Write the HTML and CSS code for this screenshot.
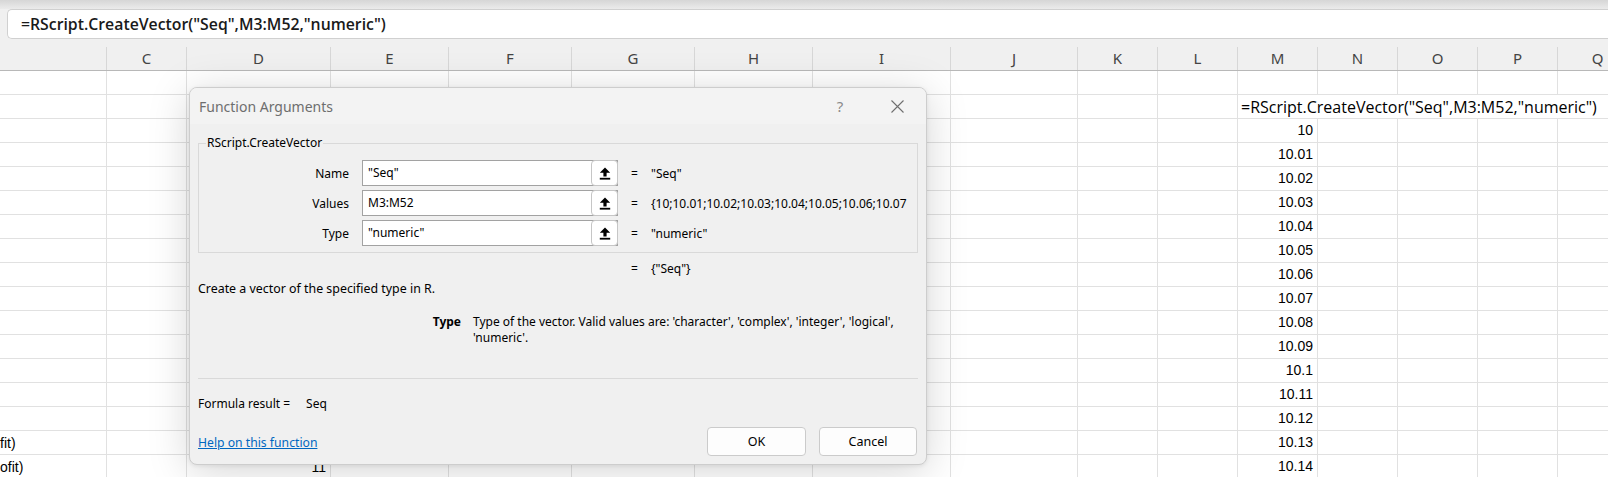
FILE: index.html
```html
<!DOCTYPE html>
<html lang="en">
<head>
<meta charset="utf-8">
<title>Function Arguments</title>
<link rel="stylesheet" href="styles.css">
</head>
<body>
<div class="app">
  <div class="topstrip"></div>
  <div class="formula-area">
    <div class="fbar">=RScript.CreateVector("Seq",M3:M52,"numeric")</div>
  </div>
  <div class="colheads">
    <div class="ch"></div>
    <div class="ch">C</div>
    <div class="ch">D</div>
    <div class="ch">E</div>
    <div class="ch">F</div>
    <div class="ch">G</div>
    <div class="ch">H</div>
    <div class="ch">I</div>
    <div class="ch">J</div>
    <div class="ch">K</div>
    <div class="ch">L</div>
    <div class="ch">M</div>
    <div class="ch">N</div>
    <div class="ch">O</div>
    <div class="ch">P</div>
    <div class="ch">Q</div>
  </div>
  <div class="sheet">
    <div class="col end">
      <div class="cell txt">fit)</div>
      <div class="cell txt">ofit)</div>
    </div>
    <div class="col"></div>
    <div class="col end"><div class="cell num">11</div></div>
    <div class="col"></div>
    <div class="col"></div>
    <div class="col"></div>
    <div class="col"></div>
    <div class="col"></div>
    <div class="col"></div>
    <div class="col"></div>
    <div class="col"></div>
    <div class="col">
      <div class="cell"></div>
      <div class="cell formula">=RScript.CreateVector("Seq",M3:M52,"numeric")</div>
      <div class="cell num">10</div>
      <div class="cell num">10.01</div>
      <div class="cell num">10.02</div>
      <div class="cell num">10.03</div>
      <div class="cell num">10.04</div>
      <div class="cell num">10.05</div>
      <div class="cell num">10.06</div>
      <div class="cell num">10.07</div>
      <div class="cell num">10.08</div>
      <div class="cell num">10.09</div>
      <div class="cell num">10.1</div>
      <div class="cell num">10.11</div>
      <div class="cell num">10.12</div>
      <div class="cell num">10.13</div>
      <div class="cell num">10.14</div>
    </div>
    <div class="col"></div>
    <div class="col"></div>
    <div class="col"></div>
    <div class="col"></div>
  </div>

  <div class="dialog">
    <div class="dlg-title">
      <span class="dlg-caption">Function Arguments</span>
      <span class="dlg-help">?</span>
      <span class="dlg-close">
        <svg width="13" height="13" viewBox="0 0 13 13"><path d="M0.5 0.5 L12.5 12.5 M12.5 0.5 L0.5 12.5" stroke="#6f6f6f" stroke-width="1.1" fill="none"/></svg>
      </span>
    </div>
    <div class="dlg-body">
      <fieldset class="args">
        <legend>RScript.CreateVector</legend>
        <div class="arg-row">
          <span class="arg-label">Name</span>
          <div class="arg-input"><span class="arg-text">"Seq"</span><span class="ref-btn"><svg width="12" height="13" viewBox="0 0 12 13"><path d="M6 0.5 L11.2 5.8 H7.6 V9.6 H4.4 V5.8 H0.8 Z" fill="#000"/><rect x="0.8" y="10.8" width="10.4" height="1.8" fill="#000"/></svg></span></div>
          <span class="eq">=</span>
          <span class="arg-val">"Seq"</span>
        </div>
        <div class="arg-row">
          <span class="arg-label">Values</span>
          <div class="arg-input"><span class="arg-text">M3:M52</span><span class="ref-btn"><svg width="12" height="13" viewBox="0 0 12 13"><path d="M6 0.5 L11.2 5.8 H7.6 V9.6 H4.4 V5.8 H0.8 Z" fill="#000"/><rect x="0.8" y="10.8" width="10.4" height="1.8" fill="#000"/></svg></span></div>
          <span class="eq">=</span>
          <span class="arg-val">{10;10.01;10.02;10.03;10.04;10.05;10.06;10.07</span>
        </div>
        <div class="arg-row">
          <span class="arg-label">Type</span>
          <div class="arg-input"><span class="arg-text">"numeric"</span><span class="ref-btn"><svg width="12" height="13" viewBox="0 0 12 13"><path d="M6 0.5 L11.2 5.8 H7.6 V9.6 H4.4 V5.8 H0.8 Z" fill="#000"/><rect x="0.8" y="10.8" width="10.4" height="1.8" fill="#000"/></svg></span></div>
          <span class="eq">=</span>
          <span class="arg-val">"numeric"</span>
        </div>
      </fieldset>
      <div class="result-row">
        <span></span>
        <span></span>
        <span class="eq">=</span>
        <span class="arg-val">{"Seq"}</span>
      </div>
      <p class="fn-desc">Create a vector of the specified type in R.</p>
      <div class="arg-help">
        <span class="arg-name">Type</span>
        <span class="arg-desc">Type of the vector. Valid values are: 'character', 'complex', 'integer', 'logical',<br>'numeric'.</span>
      </div>
      <div class="sep"></div>
      <div class="formula-result">Formula result =<span class="fr-val">Seq</span></div>
      <div class="dlg-footer">
        <a class="help-link" href="#">Help on this function</a>
        <div class="btns">
          <button class="btn btn-ok">OK</button>
          <button class="btn btn-cancel">Cancel</button>
        </div>
      </div>
    </div>
  </div>
</div>
</body>
</html>
```

FILE: styles.css
```css
* { box-sizing: border-box; }
html, body { margin: 0; padding: 0; }
body {
  width: 1608px;
  height: 477px;
  overflow: hidden;
  background: #ffffff;
  font-family: "Liberation Sans", Arial, sans-serif;
}
.app {
  position: relative;
  width: 1608px;
  height: 477px;
  overflow: hidden;
}

/* ---------- formula bar ---------- */
.topstrip {
  height: 9px;
  background: linear-gradient(#d6d6d6, #ebebeb);
}
.formula-area {
  height: 30px;
  background: #f0f0f0;
  padding-left: 7px;
}
.fbar {
  height: 30px;
  background: #ffffff;
  border: 1px solid #d0d0d0;
  border-right: 0;
  border-radius: 5px 0 0 5px;
  padding-left: 13px;
  font-family: "Open Sans", "Noto Sans", sans-serif;
  font-weight: 600;
  font-size: 15.8px;
  line-height: 28px;
  color: #1a1a1a;
  white-space: nowrap;
}

/* ---------- grid ---------- */
.colheads, .sheet {
  display: grid;
  grid-template-columns: 107px 80px 144px 118px 123px 123px 118px 138px 127px repeat(7, 80px);
}
.colheads {
  height: 32px;
  background: #f0f0f0;
  border-bottom: 1px solid #b8b8b8;
}
.ch {
  margin-top: 8px;
  border-right: 1px solid #d7d7d7;
  text-align: center;
  font-family: "Noto Sans", "Open Sans", sans-serif;
  font-size: 15px;
  line-height: 23px;
  color: #444444;
}
.sheet {
  height: 408px;
}
.col {
  display: flex;
  flex-direction: column;
  border-right: 1px solid #e1e1e1;
  background: repeating-linear-gradient(to bottom, transparent 0, transparent 23px, #e1e1e1 23px, #e1e1e1 24px);
}
.col.end { justify-content: flex-end; }
.cell {
  height: 24px;
  line-height: 24px;
  font-size: 14px;
  color: #000;
  white-space: nowrap;
  padding: 0 4px;
  flex: none;
}
.cell.num { text-align: right; }
.cell.txt { padding: 0; }
.cell.formula {
  position: relative;
  z-index: 1;
  align-self: flex-start;
  width: max-content;
  height: 23px;
  line-height: 24px;
  background: #ffffff;
  padding: 0 4px 0 3px;
  font-family: "Open Sans", "Noto Sans", sans-serif;
  font-size: 16px;
}

/* ---------- dialog ---------- */
.dialog {
  position: absolute;
  left: 189px;
  top: 87px;
  width: 738px;
  height: 378px;
  background: #f0f0f0;
  border: 1px solid #cdcdcd;
  border-radius: 8px;
  box-shadow: 0 6px 42px rgba(0, 0, 0, 0.17), 0 1px 4px rgba(0, 0, 0, 0.08);
  font-family: "Noto Sans", "Open Sans", sans-serif;
  font-size: 12px;
  color: #000;
  overflow: hidden;
}
.dlg-title {
  height: 36px;
  background: #f3f3f3;
  display: flex;
  align-items: center;
  padding: 0 14px 0 9px;
}
.dlg-caption {
  flex: 1;
  font-size: 14px;
  color: #6e6e6e;
}
.dlg-help {
  width: 30px;
  text-align: center;
  font-size: 15px;
  color: #8a8a8a;
  margin-right: 27px;
}
.dlg-close {
  width: 30px;
  display: flex;
  justify-content: center;
}
.dlg-body {
  padding: 11px 8px 0;
}
.args {
  margin: 0;
  padding: 9px 0 6px;
  border: 1px solid #d9d9d9;
  min-width: 0;
}
.args legend {
  margin-left: 7px;
  padding: 0 1px;
  line-height: 16px;
}
.arg-row, .result-row {
  display: grid;
  grid-template-columns: 163px 256px 33px 1fr;
  align-items: center;
}
.arg-row { height: 26px; }
.arg-row + .arg-row { margin-top: 4px; }
.arg-label {
  text-align: right;
  padding-right: 13px;
}
.arg-input {
  display: flex;
  height: 26px;
  background: #ffffff;
  border: 1px solid #a2a2a2;
}
.arg-text {
  flex: 1;
  padding-left: 5px;
  line-height: 24px;
  white-space: nowrap;
}
.ref-btn {
  width: 27px;
  margin: -1px -1px -1px 0;
  background: #ffffff;
  border: 1px solid #c6c6c6;
  border-radius: 4px;
  display: flex;
  align-items: center;
  justify-content: center;
}
.eq { text-align: center; }
.arg-val {
  white-space: nowrap;
  overflow: hidden;
}
.result-row {
  grid-template-columns: 164px 256px 33px 1fr;
  margin-top: 8px;
  line-height: 16px;
}
.fn-desc {
  margin: 4px 0 0;
  line-height: 16px;
  font-size: 12.4px;
}
.arg-help {
  display: grid;
  grid-template-columns: 263px 1fr;
  column-gap: 12px;
  margin-top: 17px;
  line-height: 16px;
}
.arg-name {
  text-align: right;
  font-weight: 700;
}
.sep {
  margin-top: 32px;
  border-top: 1px solid #d9d9d9;
}
.formula-result {
  margin-top: 17px;
  line-height: 16px;
}
.fr-val { margin-left: 16px; }
.dlg-footer {
  margin-top: 15px;
  display: flex;
  align-items: center;
  justify-content: space-between;
  height: 29px;
}
.help-link {
  color: #0067c0;
  text-decoration: underline;
  padding-top: 2px;
  font-size: 12.2px;
}
.btns {
  display: flex;
  gap: 13px;
  margin-right: 1px;
}
.btn {
  height: 29px;
  background: #fdfdfd;
  border: 1px solid #cbcbcb;
  border-radius: 4px;
  font-family: "Noto Sans", "Open Sans", sans-serif;
  font-size: 12.5px;
  color: #000;
  padding: 0;
}
.btn-ok { width: 99px; }
.btn-cancel { width: 98px; }
```
